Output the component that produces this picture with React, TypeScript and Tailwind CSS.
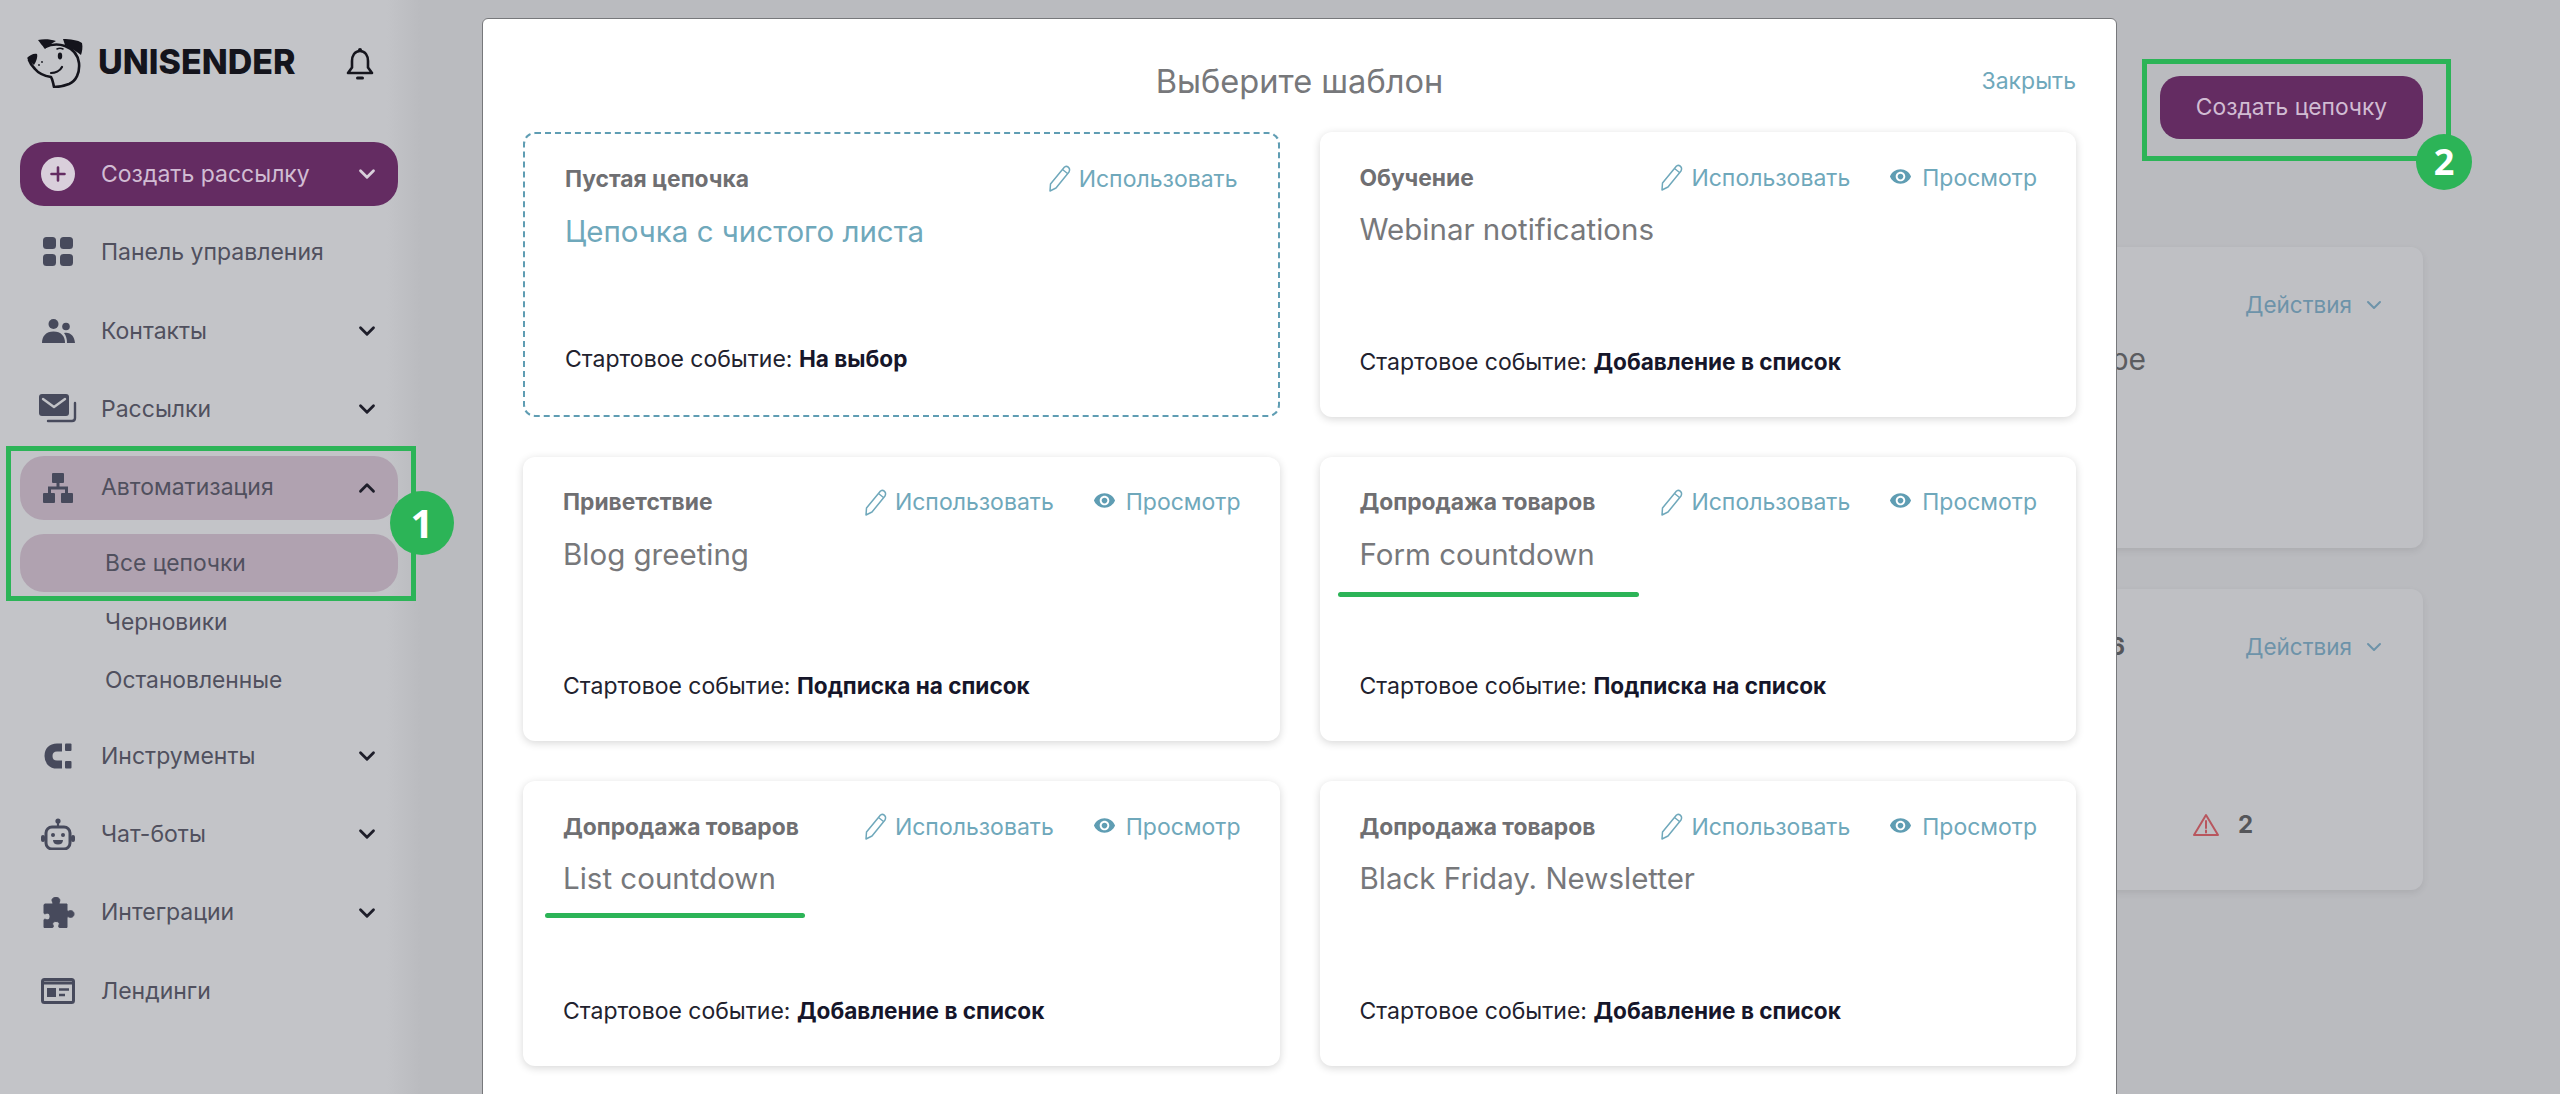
import React from 'react';
import { ChevronDown, ChevronUp } from 'lucide-react';
import { MdRemoveRedEye } from 'react-icons/md';

const iconColor = '#474a5c';

const DogLogo = () => (
  <svg width="56" height="51" viewBox="0 0 56 51" fill="none">
    <path d="M18 10C25 7 32 7 38 9C46 12 51 18 52 26C53 36 49 44 42 47C37 49 31 50 27 50C26 46 26 43 24 40C18 39 12 37 8 32C5 29 3 26 2 23" stroke="#14141c" strokeWidth="2.6" strokeLinecap="round" strokeLinejoin="round" />
    <path d="M11 3C16 2 23 2 29 4C25 6 21 9 18 12C15 8 13 6 11 3Z" fill="#14141c" />
    <path d="M36 2C43 2 51 3 55 6C56 10 55 15 54 18C50 15 44 11 38 8Z" fill="#14141c" />
    <path d="M0 21C3 18 7 16 10 17C11 20 9 25 7 28C4 26 2 23 0 21Z" fill="#14141c" />
    <ellipse cx="33" cy="19" rx="2.2" ry="3.4" fill="#14141c" />
    <path d="M30 12C32 11 34 11 36 12" stroke="#14141c" strokeWidth="1.6" strokeLinecap="round" />
    <path d="M24 36C28 36 33 34 35 30" stroke="#14141c" strokeWidth="2.2" strokeLinecap="round" />
    <circle cx="12" cy="28" r="0.9" fill="#14141c" />
    <circle cx="15" cy="25" r="0.9" fill="#14141c" />
  </svg>
);

const BellIcon = () => (
  <svg width="28" height="34" viewBox="0 0 28 34" fill="none">
    <circle cx="14" cy="3" r="2" fill="#16161e" />
    <path d="M14 4C8.5 4 6 9 6 14V20.5L2 26H26L22 20.5V14C22 9 19.5 4 14 4Z" stroke="#16161e" strokeWidth="2.6" strokeLinejoin="round" />
    <path d="M11.5 31H16.5" stroke="#16161e" strokeWidth="3" strokeLinecap="round" />
  </svg>
);

const PlusCircleIcon = () => (
  <svg width="34" height="34" viewBox="0 0 34 34">
    <circle cx="17" cy="17" r="17" fill="#d9cfdb" />
    <path d="M17 10.5V23.5M10.5 17H23.5" stroke="#642c62" strokeWidth="2.6" strokeLinecap="round" />
  </svg>
);

const GridIcon = () => (
  <svg width="30" height="30" viewBox="0 0 30 30" fill={iconColor}>
    <rect x="0" y="0" width="13" height="12" rx="3.5" />
    <rect x="17" y="0" width="13" height="12" rx="3.5" />
    <rect x="0" y="17" width="13" height="12" rx="3.5" />
    <rect x="17" y="17" width="13" height="12" rx="3.5" />
  </svg>
);

const PeopleIcon = () => (
  <svg width="34" height="24" viewBox="0 0 34 24" fill={iconColor}>
    <circle cx="12.5" cy="5" r="5" />
    <circle cx="25" cy="7.5" r="3.8" />
    <path d="M1 24C1 17 5 12.5 12.5 12.5C20 12.5 24 17 24 24Z" />
    <path d="M26 24C26 20 25 16.5 23 14C29 12.5 33.5 17 34 24Z" />
  </svg>
);

const MailStackIcon = () => (
  <svg width="38" height="30" viewBox="0 0 38 30" fill="none">
    <rect x="0" y="0" width="30" height="22" rx="3" fill={iconColor} />
    <path d="M4 5L15 13L26 5" stroke="#c2c3c7" strokeWidth="2.4" strokeLinecap="round" strokeLinejoin="round" />
    <path d="M36 9V24C36 26 35 27 33 27H9" stroke={iconColor} strokeWidth="2.4" strokeLinecap="round" />
  </svg>
);

const SitemapIcon = () => (
  <svg width="30" height="30" viewBox="0 0 30 30" fill={iconColor}>
    <rect x="9" y="0" width="12" height="10" rx="1" />
    <rect x="0" y="20" width="12" height="10" rx="1" />
    <rect x="18" y="20" width="12" height="10" rx="1" />
    <path d="M13.5 10H16.5V13.5H25V20H22V16.5H8V20H5V13.5H13.5Z" />
  </svg>
);

const MagnetIcon = () => (
  <svg width="28" height="26" viewBox="0 0 28 26" fill="none">
    <path d="M18 4.5H13C7.5 4.5 4.5 8 4.5 13C4.5 18 7.5 21.5 13 21.5H18" stroke={iconColor} strokeWidth="8" />
    <rect x="21" y="0.5" width="6.5" height="7.5" rx="1" fill={iconColor} />
    <rect x="21" y="18" width="6.5" height="7.5" rx="1" fill={iconColor} />
  </svg>
);

const RobotIcon = () => (
  <svg width="34" height="32" viewBox="0 0 34 32" fill="none">
    <circle cx="17" cy="3" r="2.6" fill={iconColor} />
    <path d="M17 4V9" stroke={iconColor} strokeWidth="2.2" />
    <rect x="5" y="9" width="24" height="22" rx="6" stroke={iconColor} strokeWidth="3" />
    <rect x="0" y="17" width="4" height="7" rx="2" fill={iconColor} />
    <rect x="30" y="17" width="4" height="7" rx="2" fill={iconColor} />
    <circle cx="12" cy="17" r="2" fill={iconColor} />
    <circle cx="22" cy="17" r="2" fill={iconColor} />
    <path d="M12 22H22C22 25 20 26.5 17 26.5C14 26.5 12 25 12 22Z" fill={iconColor} />
  </svg>
);

const PuzzleIcon = () => (
  <svg width="34" height="32" viewBox="0 0 34 32" fill={iconColor} stroke={iconColor} strokeWidth="1" strokeLinejoin="round">
    <path d="M4 7H11C12 7 12 6 11.5 5C10 2 12 0.5 15 0.5C18 0.5 19.5 2 18.5 5C18 6 18 7 19 7H26V13C26 14 27 14.5 28 14C31 13 33 14.5 33 17C33 19.5 31 21 28 20C27 19.5 26 20 26 21V30.5H18.5C17.5 30.5 17.5 29 18 28C19 26 17.5 24.5 15 24.5C12.5 24.5 11 26 12 28C12.5 29 12.5 30.5 11.5 30.5H3V23C3 22 4 22 5 22.5C7 23.5 9 22 9 19.5C9 17 7 15.5 5 16.5C4 17 3 17 3 16V8C3 7.5 3.5 7 4 7Z" />
  </svg>
);

const LandingIcon = () => (
  <svg width="34" height="26" viewBox="0 0 34 26" fill="none">
    <rect x="1.5" y="1.5" width="31" height="23" rx="2" stroke={iconColor} strokeWidth="3" />
    <path d="M1.5 5H32.5" stroke={iconColor} strokeWidth="3" />
    <rect x="6" y="10" width="9" height="9" fill={iconColor} />
    <path d="M18 11.5H28M18 17H24" stroke={iconColor} strokeWidth="2.4" />
  </svg>
);

const PencilIcon = () => (
  <svg width="24" height="28" viewBox="0 0 24 28" fill="none" stroke="#6fa8bb" strokeWidth="1.5" strokeLinejoin="round">
    <path d="M17.5 2C19 1 21 1.5 22 3C23 4.5 22.5 6 22 7L9 23L3 26L3.5 19Z" />
    <path d="M15.5 4.5L20.5 8.5" />
  </svg>
);

const WarningIcon = () => (
  <svg width="26" height="24" viewBox="0 0 26 24" fill="none" stroke="#b8565e" strokeWidth="2" strokeLinejoin="round">
    <path d="M13 2L25 22H1Z" />
    <path d="M13 8V15M13 17.5V19.5" strokeLinecap="round" />
  </svg>
);

const NavItem = ({ icon, label, chevron, active }: { icon: React.ReactNode; label: string; chevron?: 'down' | 'up'; active?: boolean }) => (
  <div className={`flex h-16 items-center rounded-[24px] ${active ? 'bg-[#b0a2b0]' : ''}`}>
    <div className="flex w-[76px] shrink-0 justify-center">{icon}</div>
    <span className="flex-1 pl-[5px] text-[23px] text-[#50505e]">{label}</span>
    {chevron === 'down' && <ChevronDown size={26} strokeWidth={2.6} className="mr-[18px] text-[#1e1e2a]" />}
    {chevron === 'up' && <ChevronUp size={26} strokeWidth={2.6} className="mr-[18px] text-[#1e1e2a]" />}
  </div>
);

const SubItem = ({ label, active }: { label: string; active?: boolean }) => (
  <div className={`flex h-[58.5px] items-center rounded-[24px] pl-[85px] text-[22.8px] text-[#50505e] ${active ? 'bg-[#b0a2b0]' : ''}`}>
    {label}
  </div>
);

const Sidebar = () => (
  <aside className="h-full w-[420px] shrink-0 bg-linear-to-r from-[#c3c4c8] from-92% to-[#babbbf] pl-5 pr-[22px]">
    <div className="-ml-5 flex h-[142px] items-center pb-[18px] pl-[27px]">
      <DogLogo />
      <span className="ml-[15px] text-[34px] font-extrabold leading-none text-[#14141c]">UNISENDER</span>
      <div className="ml-[50px] mt-1">
        <BellIcon />
      </div>
    </div>
    <div className="flex flex-col gap-[14.4px]">
      <div className="flex h-16 items-center rounded-[24px] bg-[#642c62]">
        <div className="flex w-[76px] shrink-0 justify-center">
          <PlusCircleIcon />
        </div>
        <span className="flex-1 pl-[5px] text-[23px] text-[#d1bcd3]">Создать рассылку</span>
        <ChevronDown size={26} strokeWidth={2.6} className="mr-[18px] text-[#d9cfdb]" />
      </div>
      <NavItem icon={<GridIcon />} label="Панель управления" />
      <NavItem icon={<PeopleIcon />} label="Контакты" chevron="down" />
      <NavItem icon={<MailStackIcon />} label="Рассылки" chevron="down" />
      <NavItem icon={<SitemapIcon />} label="Автоматизация" chevron="up" active />
      <div>
        <SubItem label="Все цепочки" active />
        <SubItem label="Черновики" />
        <SubItem label="Остановленные" />
      </div>
      <NavItem icon={<MagnetIcon />} label="Инструменты" chevron="down" />
      <NavItem icon={<RobotIcon />} label="Чат-боты" chevron="down" />
      <NavItem icon={<PuzzleIcon />} label="Интеграции" chevron="down" />
      <NavItem icon={<LandingIcon />} label="Лендинги" />
    </div>
  </aside>
);

// cards behind the modal, only their right ends show
const ChainCard = ({ top, name, bottom }: { top: React.ReactNode; name: React.ReactNode; bottom: React.ReactNode }) => (
  <div className="flex h-[301px] flex-col rounded-xl bg-[#bfc0c4] pt-[44px] shadow-[0_3px_7px_rgba(0,0,0,0.08)]">
    <div className="flex h-7 items-center">
      <div className="w-[1605px] text-right text-[24px] font-bold text-[#55565a]">{top}</div>
      <span className="ml-[120px] text-[22.5px] text-[#6d93a9]">Действия</span>
      <ChevronDown size={24} strokeWidth={2} className="ml-[10px] text-[#6d93a9]" />
    </div>
    <div className="mt-5 h-10 w-[1626px] text-right text-[30px] leading-10 text-[#5b5c60]">{name}</div>
    <div className="mt-[90px] flex h-7 items-center pl-[1673px]">{bottom}</div>
  </div>
);

type Template = {
  category: string;
  name: string;
  event: string;
  underline?: string;
};

const templates: Template[] = [
  { category: 'Обучение', name: 'Webinar notifications', event: 'Добавление в список' },
  { category: 'Приветствие', name: 'Blog greeting', event: 'Подписка на список' },
  { category: 'Допродажа товаров', name: 'Form countdown', event: 'Подписка на список', underline: 'left-[18px] top-[135px] w-[301px]' },
  { category: 'Допродажа товаров', name: 'List countdown', event: 'Добавление в список', underline: 'left-[22px] top-[132px] w-[260px]' },
  { category: 'Допродажа товаров', name: 'Black Friday. Newsletter', event: 'Добавление в список' },
];

const Action = ({ icon, label, iconGap }: { icon: React.ReactNode; label: string; iconGap: string }) => (
  <div className="flex items-center">
    {icon}
    <span className={`${iconGap} text-[23px] text-[#6fa8bb]`}>{label}</span>
  </div>
);

const CardFooter = ({ event }: { event: string }) => (
  <div className="mt-auto text-[23px] leading-7 text-[#22222e]">
    Стартовое событие: <b className="text-[22.6px] font-bold text-[#16162a]">{event}</b>
  </div>
);

const TemplateCard = ({ t }: { t: Template }) => (
  <div className="relative flex h-[284.5px] flex-col rounded-xl bg-white pb-[41px] pl-10 pr-[39px] pt-[32px] shadow-[0_2px_9px_rgba(0,0,0,0.16)]">
    <div className="flex h-7 items-center justify-between">
      <span className="text-[22.8px] font-bold text-[#6f6f72]">{t.category}</span>
      <div className="flex items-center gap-[39px]">
        <Action icon={<PencilIcon />} label="Использовать" iconGap="ml-[8px]" />
        <Action icon={<MdRemoveRedEye size={23} color="#5f9db3" className="-mt-1" />} label="Просмотр" iconGap="ml-[10px]" />
      </div>
    </div>
    <div className="mt-[17px] text-[29.5px] leading-10 text-[#77787b]">{t.name}</div>
    {t.underline && <div className={`absolute h-[5px] rounded-full bg-[#2cb457] ${t.underline}`} />}
    <CardFooter event={t.event} />
  </div>
);

const TemplateModal = () => (
  <div className="absolute bottom-[-40px] left-[482px] top-[18px] w-[1635px] overflow-hidden rounded-t-md border border-[#77787b] bg-white px-10">
    <div className="relative flex h-[113px] items-center justify-center pt-3">
      <span className="text-[32.6px] text-[#77787b]">Выберите шаблон</span>
      <span className="absolute right-0 text-[23px] text-[#6fa8bb]">Закрыть</span>
    </div>
    <div className="grid grid-cols-2 gap-x-10 gap-y-10">
      <div className="flex h-[284.5px] flex-col rounded-xl border-2 border-dashed border-[#5f9db3] bg-white pb-[41.5px] pl-10 pr-10 pt-[31px]">
        <div className="flex h-7 items-center justify-between">
          <span className="text-[22.8px] font-bold text-[#6f6f72]">Пустая цепочка</span>
          <Action icon={<PencilIcon />} label="Использовать" iconGap="ml-[8px]" />
        </div>
        <div className="mt-[18px] text-[29.5px] leading-10 text-[#6fa8bb]">Цепочка с чистого листа</div>
        <CardFooter event="На выбор" />
      </div>
      {templates.map((t) => (
        <TemplateCard key={t.name} t={t} />
      ))}
    </div>
  </div>
);

const Badge = ({ n, className }: { n: number; className: string }) => (
  <div className={`absolute flex items-center justify-center rounded-full bg-[#2cb457] font-['Open_Sans',sans-serif] font-bold text-white ${className}`}>
    {n}
  </div>
);

export default function App() {
  return (
    <div className="relative flex h-[1094px] w-[2560px] overflow-hidden bg-[#babbbf] font-['Inter',sans-serif]">
      <Sidebar />
      <main className="flex-1 pl-[100px] pr-[137px] pt-[76px]">
        <div className="flex justify-end">
          <button className="h-[63px] w-[263px] rounded-[20px] bg-[#642c62] text-[22.8px] text-[#d1bcd3]">Создать цепочку</button>
        </div>
        <div className="mt-[108px] flex flex-col gap-[41px]">
          <ChainCard top={null} name="ре" bottom={null} />
          <ChainCard
            top="6"
            name={null}
            bottom={
              <>
                <WarningIcon />
                <span className="ml-[19px] text-[24px] font-bold text-[#55565a]">2</span>
              </>
            }
          />
        </div>
      </main>

      <TemplateModal />

      <div className="absolute left-[6px] top-[446px] h-[155px] w-[410px] border-[5px] border-[#2cb457]" />
      <Badge n={1} className="left-[390px] top-[491px] h-16 w-16 text-[40px]" />
      <div className="absolute left-[2142px] top-[59px] h-[102px] w-[309px] border-[5px] border-[#2cb457]" />
      <Badge n={2} className="left-[2416px] top-[134px] h-14 w-14 text-[36px]" />
    </div>
  );
}
